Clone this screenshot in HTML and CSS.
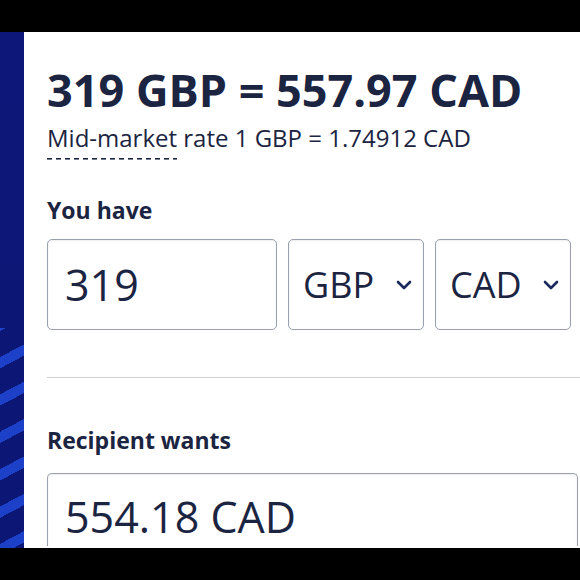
FILE: index.html
```html
<!DOCTYPE html>
<html lang="en">
<head>
<meta charset="utf-8">
<link rel="stylesheet" href="styles.css">
</head>
<body>
<div class="topbar"></div>
<div class="main">
  <div class="strip"></div>
  <div class="panel">
    <h1 class="title">319 GBP = 557.97 CAD</h1>
    <p class="rate"><span class="dashed">Mid-market</span> rate 1 GBP = 1.74912 CAD</p>
    <div class="label">You have</div>
    <div class="row">
      <div class="field amount">319</div>
      <div class="field select"><span>GBP</span>
        <svg class="chev" viewBox="0 0 16 10" width="16" height="10"><path d="M2 2 L8 8 L14 2" fill="none" stroke="#1a2a5c" stroke-width="2.6" stroke-linecap="round" stroke-linejoin="round"/></svg>
      </div>
      <div class="field select"><span>CAD</span>
        <svg class="chev" viewBox="0 0 16 10" width="16" height="10"><path d="M2 2 L8 8 L14 2" fill="none" stroke="#1a2a5c" stroke-width="2.6" stroke-linecap="round" stroke-linejoin="round"/></svg>
      </div>
    </div>
    <hr class="divider">
    <div class="label label2">Recipient wants</div>
    <div class="field wide">554.18 CAD</div>
  </div>
</div>
<div class="bottombar"></div>
</body>
</html>
```

FILE: styles.css
```css
html, body {
  margin: 0;
  padding: 0;
  width: 580px;
  height: 580px;
  overflow: hidden;
  background: #000;
  font-family: "Open Sans", "Noto Sans", sans-serif;
  color: #1b2441;
}
.topbar { height: 32px; background: #000; }
.bottombar { height: 32px; background: #000; }
.main {
  display: flex;
  height: 516px;
  overflow: hidden;
}
.strip {
  width: 24px;
  flex: none;
  background:
    linear-gradient(#0c1779, #0c1675) top / 100% 296px no-repeat,
    repeating-linear-gradient(152deg, #0c1675 0 23px, #1c40c8 23px 33px);
}
.panel {
  flex: 1;
  background: #fff;
  padding: 28px 0 0 23px;
  display: flex;
  flex-direction: column;
  overflow: hidden;
}
.title {
  margin: 0;
  font-size: 45px;
  font-weight: 700;
  line-height: 60px;
  letter-spacing: 0;
}
.rate {
  margin: 2px 0 0;
  font-size: 24px;
  line-height: 32px;
}
.dashed {
  padding-bottom: 6px;
  background: repeating-linear-gradient(90deg, #1b2441 0 5px, transparent 5px 9px) left bottom / 100% 1.6px no-repeat;
}
.label {
  margin-top: 41px;
  font-size: 23px;
  font-weight: 700;
  line-height: 30px;
}
.row {
  display: flex;
  gap: 11px;
  margin-top: 14px;
}
.field {
  border: 1px solid #9aa0ae;
  border-radius: 5px;
  box-sizing: border-box;
  height: 91px;
  display: flex;
  align-items: center;
  font-size: 43px;
  padding-left: 17px;
  box-shadow: inset 0 1px 2px rgba(0,0,0,0.08);
}
.amount { width: 230px; }
.select {
  width: 136px;
  padding-left: 14px;
  padding-right: 11px;
  justify-content: space-between;
  font-size: 36px;
}
.chev { flex: none; }
.divider {
  border: 0;
  border-top: 1.5px solid #cdd0d8;
  margin: 47px 0 0;
  width: 540px;
}
.label2 { margin-top: 47px; }
.wide {
  margin-top: 18px;
  width: 531px;
  height: 73px;
  align-items: flex-start;
  padding-top: 18px;
  line-height: 50px;
  border-bottom: none;
  border-radius: 5px 5px 0 0;
}
```
